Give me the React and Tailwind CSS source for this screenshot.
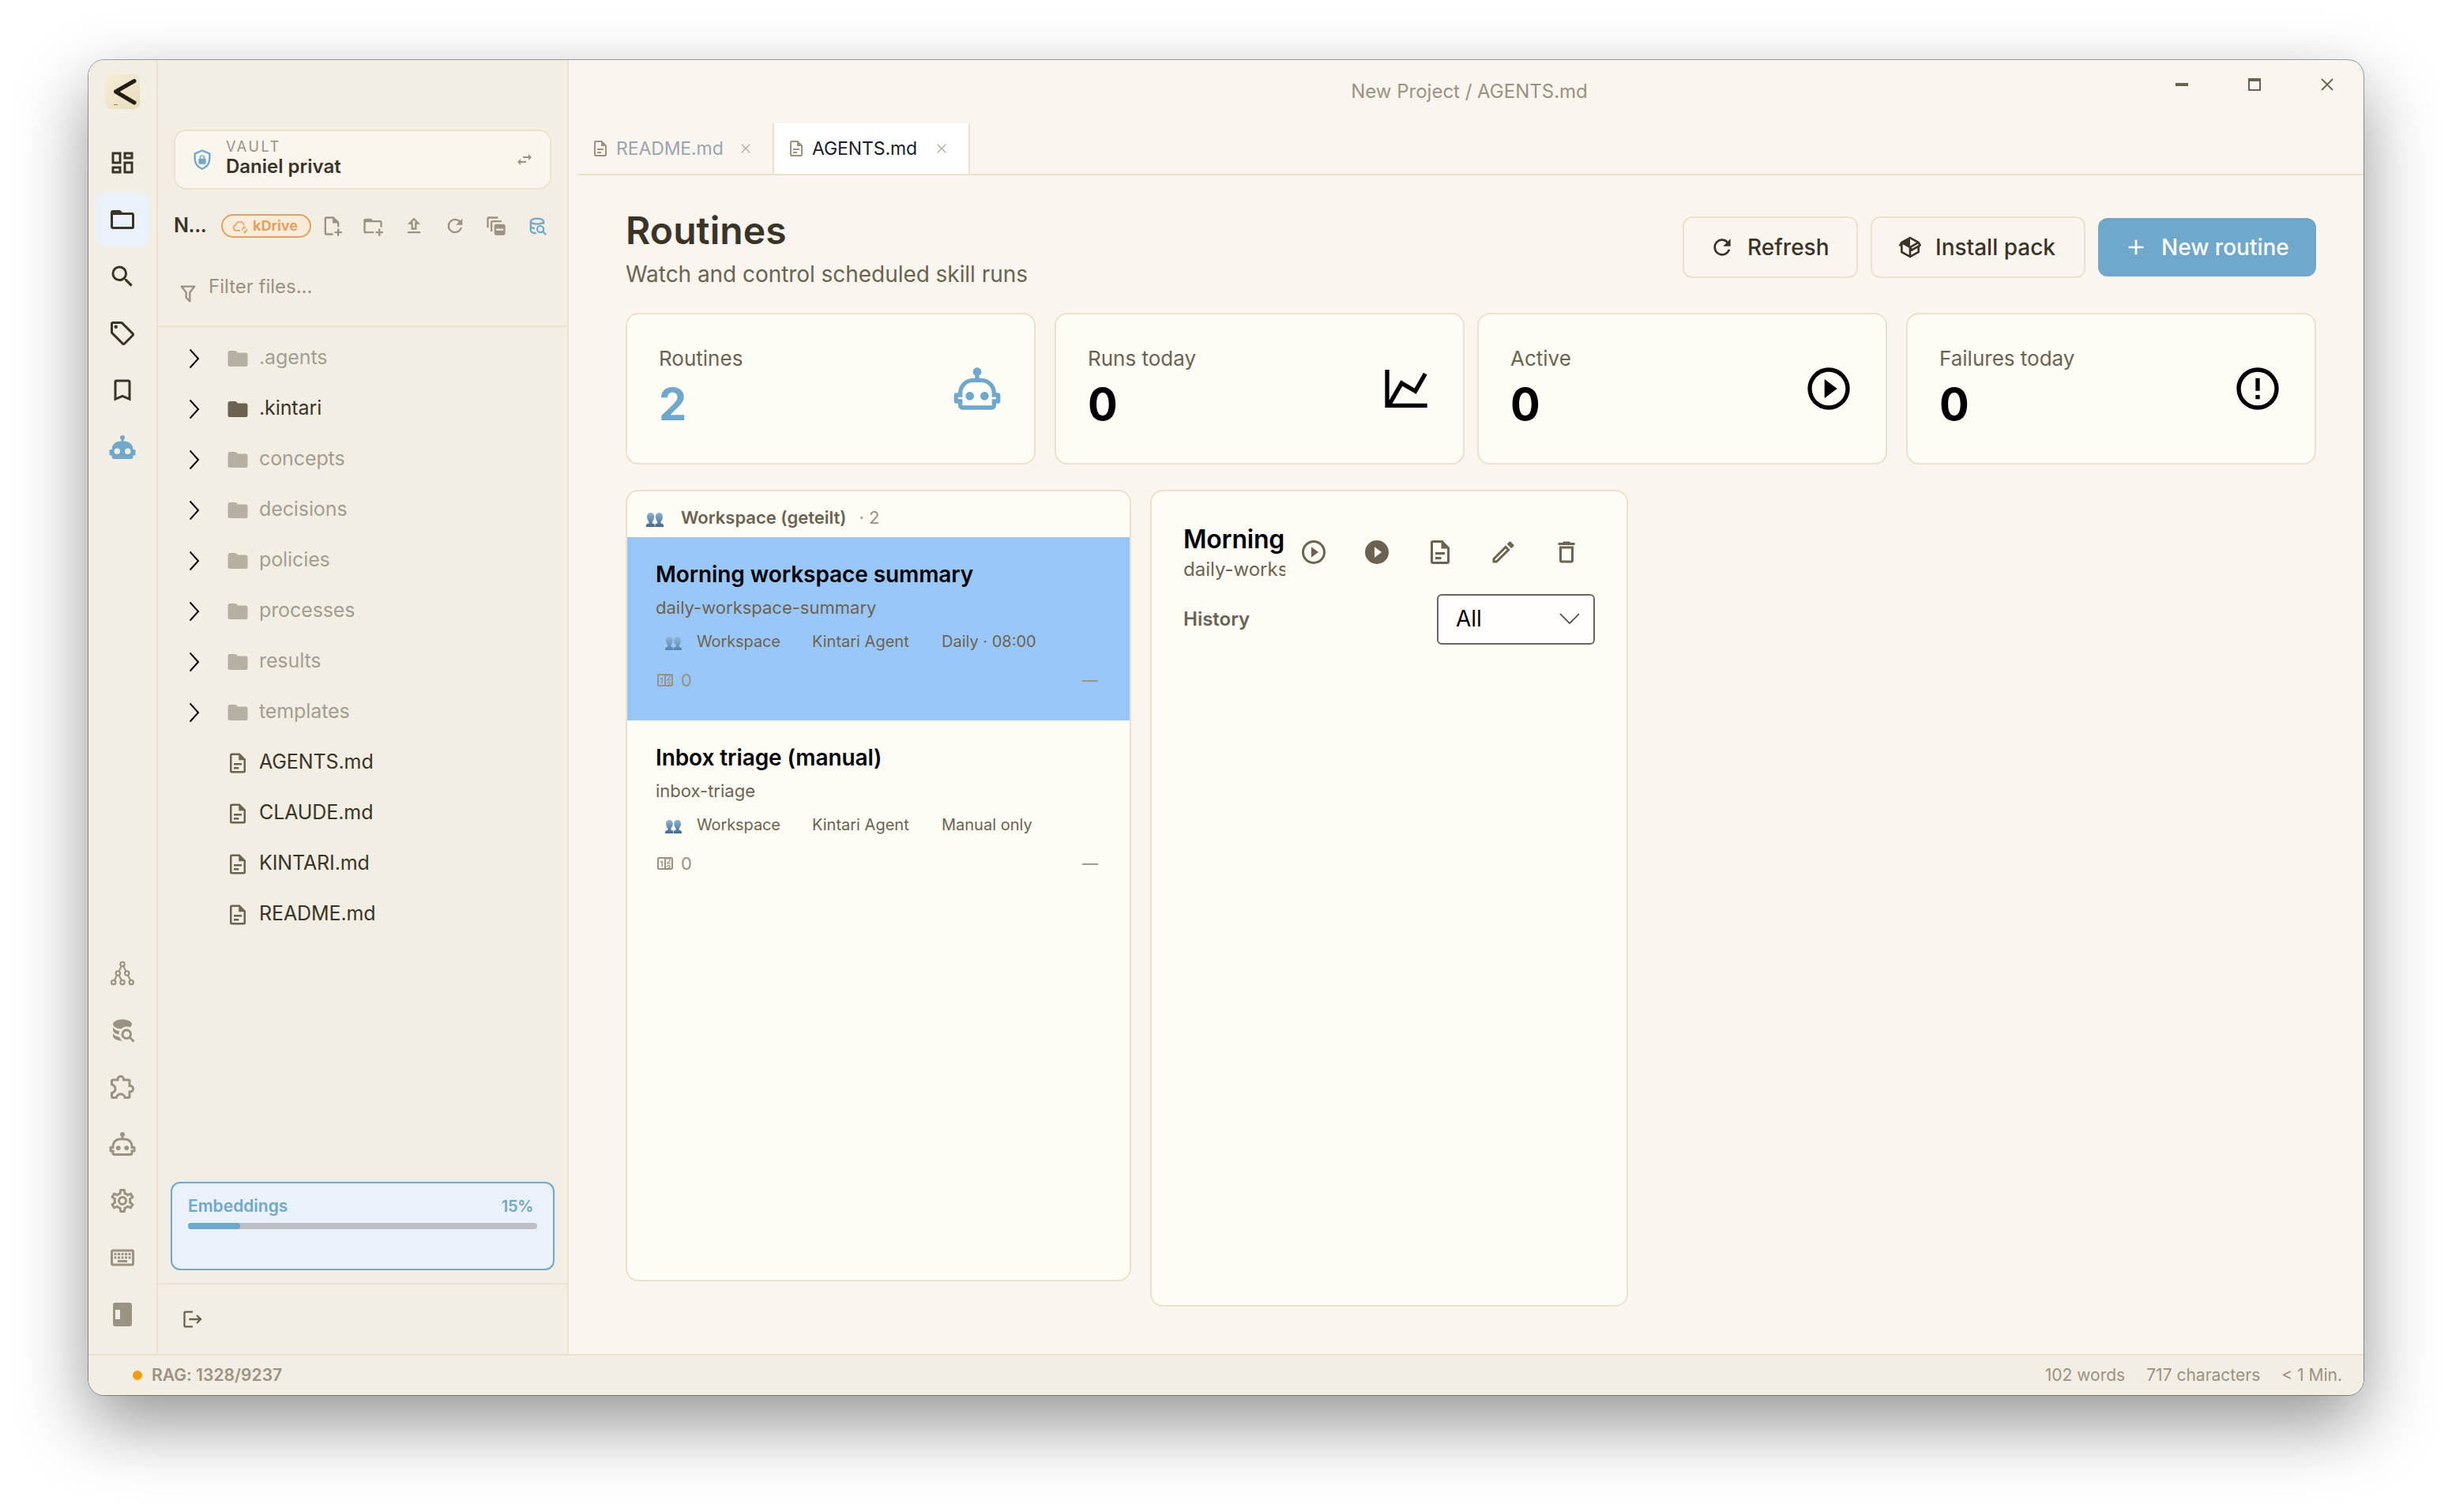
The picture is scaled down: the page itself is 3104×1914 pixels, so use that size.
import clsx from "clsx";

const paths = {
  dashboard:
    "M19,5V7H15V5H19M9,5V11H5V5H9M19,13V19H15V13H19M9,17V19H5V17H9M21,3H13V9H21V3M11,3H3V13H11V3M21,11H13V21H21V11M11,15H3V21H11V15Z",
  folderOutline:
    "M20,18H4V8H20M20,6H12L10,4H4C2.89,4 2,4.89 2,6V18A2,2 0 0,0 4,20H20A2,2 0 0,0 22,18V8C22,6.89 21.1,6 20,6Z",
  folder:
    "M10,4H4C2.89,4 2,4.89 2,6V18A2,2 0 0,0 4,20H20A2,2 0 0,0 22,18V8C22,6.89 21.1,6 20,6H12L10,4Z",
  search:
    "M9.5,3A6.5,6.5 0 0,1 16,9.5C16,11.11 15.41,12.59 14.44,13.73L14.71,14H15.5L20.5,19L19,20.5L14,15.5V14.71L13.73,14.44C12.59,15.41 11.11,16 9.5,16A6.5,6.5 0 0,1 3,9.5A6.5,6.5 0 0,1 9.5,3M9.5,5C7,5 5,7 5,9.5C5,12 7,14 9.5,14C12,14 14,12 14,9.5C14,7 12,5 9.5,5Z",
  tag: "M21.41 11.58L12.41 2.58A2 2 0 0 0 11 2H4A2 2 0 0 0 2 4V11A2 2 0 0 0 2.59 12.42L11.59 21.42A2 2 0 0 0 13 22A2 2 0 0 0 14.41 21.41L21.41 14.41A2 2 0 0 0 22 13A2 2 0 0 0 21.41 11.58M13 20L4 11V4H11L20 13M6.5 5A1.5 1.5 0 1 1 5 6.5A1.5 1.5 0 0 1 6.5 5Z",
  bookmark:
    "M17,18L12,15.82L7,18V5H17M17,3H7A2,2 0 0,0 5,5V21L12,18L19,21V5C19,3.89 18.1,3 17,3Z",
  robot:
    "M12,2A2,2 0 0,1 14,4C14,4.74 13.6,5.39 13,5.73V7H14A7,7 0 0,1 21,14H22A1,1 0 0,1 23,15V18A1,1 0 0,1 22,19H21V20A2,2 0 0,1 19,22H5A2,2 0 0,1 3,20V19H2A1,1 0 0,1 1,18V15A1,1 0 0,1 2,14H3A7,7 0 0,1 10,7H11V5.73C10.4,5.39 10,4.74 10,4A2,2 0 0,1 12,2M7.5,13A2.5,2.5 0 0,0 5,15.5A2.5,2.5 0 0,0 7.5,18A2.5,2.5 0 0,0 10,15.5A2.5,2.5 0 0,0 7.5,13M16.5,13A2.5,2.5 0 0,0 14,15.5A2.5,2.5 0 0,0 16.5,18A2.5,2.5 0 0,0 19,15.5A2.5,2.5 0 0,0 16.5,13Z",
  robotOutline:
    "M17.5 15.5C17.5 16.61 16.61 17.5 15.5 17.5S13.5 16.61 13.5 15.5 14.4 13.5 15.5 13.5 17.5 14.4 17.5 15.5M8.5 13.5C7.4 13.5 6.5 14.4 6.5 15.5S7.4 17.5 8.5 17.5 10.5 16.61 10.5 15.5 9.61 13.5 8.5 13.5M23 15V18C23 18.55 22.55 19 22 19H21V20C21 21.11 20.11 22 19 22H5C3.9 22 3 21.11 3 20V19H2C1.45 19 1 18.55 1 18V15C1 14.45 1.45 14 2 14H3C3 10.13 6.13 7 10 7H11V5.73C10.4 5.39 10 4.74 10 4C10 2.9 10.9 2 12 2S14 2.9 14 4C14 4.74 13.6 5.39 13 5.73V7H14C17.87 7 21 10.13 21 14H22C22.55 14 23 14.45 23 15M21 16H19V14C19 11.24 16.76 9 14 9H10C7.24 9 5 11.24 5 14V16H3V17H5V20H19V17H21V16Z",
  dbSearch:
    "M18.68,12.32C16.92,10.56 14.07,10.57 12.32,12.33C10.56,14.09 10.56,16.94 12.32,18.69C13.81,20.17 16.11,20.43 17.89,19.32L21,22.39L22.39,21L19.3,17.89C20.43,16.12 20.17,13.8 18.68,12.32M17.27,17.27C16.29,18.25 14.71,18.24 13.73,17.27C12.76,16.29 12.76,14.71 13.74,13.73C14.71,12.76 16.29,12.76 17.27,13.73C18.24,14.71 18.24,16.29 17.27,17.27M10.9,20.1C10.25,19.44 9.74,18.65 9.42,17.78C6.27,17.25 4,15.76 4,14V17C4,19.21 7.58,21 12,21V21C11.6,20.74 11.23,20.44 10.9,20.1M4,9V12C4,13.68 6.07,15.12 9,15.7C9,15.63 9,15.57 9,15.5C9,14.57 9.2,13.65 9.58,12.81C6.34,12.3 4,10.79 4,9M12,3C7.58,3 4,4.79 4,7C4,9 7,10.68 10.85,11H10.9C12.1,9.74 13.76,9 15.5,9C16.41,9 17.31,9.19 18.14,9.56C19.17,9.09 19.87,8.12 20,7C20,4.79 16.42,3 12,3Z",
  puzzle:
    "M22,13.5C22,15.26 20.7,16.72 19,16.96V20A2,2 0 0,1 17,22H13.2V21.7A2.7,2.7 0 0,0 10.5,19C9,19 7.8,20.21 7.8,21.7V22H4A2,2 0 0,1 2,20V16.2H2.3C3.79,16.2 5,15 5,13.5C5,12 3.79,10.8 2.3,10.8H2V7A2,2 0 0,1 4,5H7.04C7.28,3.3 8.74,2 10.5,2C12.26,2 13.72,3.3 13.96,5H17A2,2 0 0,1 19,7V10.04C20.7,10.28 22,11.74 22,13.5M17,15H18.5A1.5,1.5 0 0,0 20,13.5A1.5,1.5 0 0,0 18.5,12H17V7H12V5.5A1.5,1.5 0 0,0 10.5,4A1.5,1.5 0 0,0 9,5.5V7H4V9.12C5.76,9.8 7,11.5 7,13.5C7,15.5 5.75,17.2 4,17.88V20H6.12C6.8,18.25 8.5,17 10.5,17C12.5,17 14.2,18.25 14.88,20H17V15Z",
  cog: "M12,8A4,4 0 0,1 16,12A4,4 0 0,1 12,16A4,4 0 0,1 8,12A4,4 0 0,1 12,8M12,10A2,2 0 0,0 10,12A2,2 0 0,0 12,14A2,2 0 0,0 14,12A2,2 0 0,0 12,10M10,22C9.75,22 9.54,21.82 9.5,21.58L9.13,18.93C8.5,18.68 7.96,18.34 7.44,17.94L4.95,18.95C4.73,19.03 4.46,18.95 4.34,18.73L2.34,15.27C2.21,15.05 2.27,14.78 2.46,14.63L4.57,12.97L4.5,12L4.57,11L2.46,9.37C2.27,9.22 2.21,8.95 2.34,8.73L4.34,5.27C4.46,5.05 4.73,4.96 4.95,5.05L7.44,6.05C7.96,5.66 8.5,5.32 9.13,5.07L9.5,2.42C9.54,2.18 9.75,2 10,2H14C14.25,2 14.46,2.18 14.5,2.42L14.87,5.07C15.5,5.32 16.04,5.66 16.56,6.05L19.05,5.05C19.27,4.96 19.54,5.05 19.66,5.27L21.66,8.73C21.79,8.95 21.73,9.22 21.54,9.37L19.43,11L19.5,12L19.43,13L21.54,14.63C21.73,14.78 21.79,15.05 21.66,15.27L19.66,18.73C19.54,18.95 19.27,19.04 19.05,18.95L16.56,17.95C16.04,18.34 15.5,18.68 14.87,18.93L14.5,21.58C14.46,21.82 14.25,22 14,22H10M11.25,4L10.88,6.61C9.68,6.86 8.62,7.5 7.85,8.39L5.44,7.35L4.69,8.65L6.8,10.2C6.4,11.37 6.4,12.64 6.8,13.8L4.68,15.36L5.43,16.66L7.86,15.62C8.63,16.5 9.68,17.14 10.87,17.38L11.24,20H12.76L13.13,17.39C14.32,17.14 15.37,16.5 16.14,15.62L18.57,16.66L19.32,15.36L17.2,13.81C17.6,12.64 17.6,11.37 17.2,10.2L19.31,8.65L18.56,7.35L16.15,8.39C15.38,7.5 14.32,6.86 13.12,6.62L12.75,4H11.25Z",
  keyboard:
    "M4,5A2,2 0 0,0 2,7V17A2,2 0 0,0 4,19H20A2,2 0 0,0 22,17V7A2,2 0 0,0 20,5H4M4,7H20V17H4V7M5,8V10H7V8H5M8,8V10H10V8H8M11,8V10H13V8H11M14,8V10H16V8H14M17,8V10H19V8H17M5,11V13H7V11H5M8,11V13H10V11H8M11,11V13H13V11H11M14,11V13H16V11H14M17,11V13H19V11H17M8,14V16H16V14H8Z",
  panel: "M6,2H18A2,2 0 0,1 20,4V20A2,2 0 0,1 18,22H6A2,2 0 0,1 4,20V4A2,2 0 0,1 6,2M6,8V16H10V8H6Z",
  shieldLock:
    "M21,11C21,16.55 17.16,21.74 12,23C6.84,21.74 3,16.55 3,11V5L12,1L21,5V11M12,21C15.75,20 19,15.54 19,11.22V6.3L12,3.18L5,6.3V11.22C5,15.54 8.25,20 12,21M14.8,11V9.5C14.8,8.1 13.4,7 12,7C10.6,7 9.2,8.1 9.2,9.5V11C8.6,11 8,11.6 8,12.2V15.7C8,16.4 8.6,17 9.2,17H14.7C15.4,17 16,16.4 16,15.8V12.3C16,11.6 15.4,11 14.8,11M13.5,11H10.5V9.5C10.5,8.7 11.2,8.2 12,8.2C12.8,8.2 13.5,8.7 13.5,9.5V11Z",
  swap: "M21,9L17,5V8H10V10H17V13M7,11L3,15L7,19V16H14V14H7V11Z",
  filePlus:
    "M23 18H20V15H18V18H15V20H18V23H20V20H23M6 2C4.89 2 4 2.89 4 4V20C4 21.11 4.89 22 6 22H13.81C13.45 21.38 13.2 20.7 13.08 20H6V4H13V9H18V13.08C18.33 13.03 18.67 13 19 13C19.34 13 19.67 13.03 20 13.08V8L14 2",
  folderPlus:
    "M13 19C13 19.34 13.04 19.67 13.09 20H4C2.9 20 2 19.11 2 18V6C2 4.89 2.89 4 4 4H10L12 6H20C21.1 6 22 6.89 22 8V13.81C21.39 13.46 20.72 13.22 20 13.09V8H4V18H13.09C13.04 18.33 13 18.66 13 19M20 18V15H18V18H15V20H18V23H20V20H23V18H20Z",
  upload: "M9,10V16H15V10H19L12,3L5,10H9M12,5.8L14.2,8H13V14H11V8H9.8L12,5.8M19,18H5V20H19V18Z",
  refresh:
    "M17.65,6.35C16.2,4.9 14.21,4 12,4A8,8 0 0,0 4,12A8,8 0 0,0 12,20C15.73,20 18.84,17.45 19.73,14H17.65C16.83,16.33 14.61,18 12,18A6,6 0 0,1 6,12A6,6 0 0,1 12,6C13.66,6 15.14,6.69 16.22,7.78L13,11H20V4L17.65,6.35Z",
  collapseAll:
    "M4,2A2,2 0 0,0 2,4V14H4V4H14V2H4M8,6A2,2 0 0,0 6,8V18H8V8H18V6H8M12,10A2,2 0 0,0 10,12V20A2,2 0 0,0 12,22H20A2,2 0 0,0 22,20V12A2,2 0 0,0 20,10H12M20,15V17H12V15H20Z",
  filter:
    "M15,19.88C15.04,20.18 14.94,20.5 14.71,20.71C14.32,21.1 13.69,21.1 13.3,20.71L9.29,16.7C9.06,16.47 8.96,16.16 9,15.87V10.75L4.21,4.62C3.87,4.19 3.95,3.56 4.38,3.22C4.57,3.08 4.78,3 5,3H19C19.22,3 19.43,3.08 19.62,3.22C20.05,3.56 20.13,4.19 19.79,4.62L15,10.75V19.88M7.04,5L11,10.06V15.58L13,17.58V10.05L16.96,5H7.04Z",
  file: "M6,2A2,2 0 0,0 4,4V20A2,2 0 0,0 6,22H18A2,2 0 0,0 20,20V8L14,2H6M6,4H13V9H18V20H6V4M8,12V14H16V12H8M8,16V18H13V16H8Z",
  logout:
    "M17 7L15.59 8.41L18.17 11H8V13H18.17L15.59 15.58L17 17L22 12M4 5H12V3H4C2.9 3 2 3.9 2 5V19C2 20.1 2.9 21 4 21H12V19H4V5Z",
  pack: "M2,10.96C1.5,10.68 1.35,10.07 1.63,9.59L3.13,7C3.24,6.8 3.41,6.66 3.6,6.58L11.43,2.18C11.59,2.06 11.79,2 12,2C12.21,2 12.41,2.06 12.57,2.18L20.47,6.62C20.66,6.72 20.82,6.88 20.91,7.08L22.36,9.6C22.64,10.08 22.47,10.69 22,10.96L21,11.54V16.5C21,16.88 20.79,17.21 20.47,17.38L12.57,21.82C12.41,21.94 12.21,22 12,22C11.79,22 11.59,21.94 11.43,21.82L3.53,17.38C3.21,17.21 3,16.88 3,16.5V10.96C2.7,11.13 2.32,11.14 2,10.96M12,4.15L12,10.85L17.96,7.5L12,4.15M5,15.91L11,19.29V12.58L5,9.21V15.91M19,15.91V12.69L14,15.59C13.67,15.77 13.3,15.76 13,15.6V19.29L19,15.91M13.85,13.36L20.13,9.73L19.55,8.72L13.27,12.35L13.85,13.36Z",
  plus: "M19,13H13V19H11V13H5V11H11V5H13V11H19V13Z",
  chart: "M16,11.78L20.24,4.45L21.97,5.45L16.74,14.5L10.23,10.75L5.46,19H22V21H2V3H4V17.54L9.5,8L16,11.78Z",
  playOutline:
    "M12,20C7.59,20 4,16.41 4,12C4,7.59 7.59,4 12,4C16.41,4 20,7.59 20,12C20,16.41 16.41,20 12,20M12,2A10,10 0 0,0 2,12A10,10 0 0,0 12,22A10,10 0 0,0 22,12A10,10 0 0,0 12,2M10,16.5L16,12L10,7.5V16.5Z",
  play: "M10,16.5V7.5L16,12M12,2A10,10 0 0,0 2,12A10,10 0 0,0 12,22A10,10 0 0,0 22,12A10,10 0 0,0 12,2Z",
  alert:
    "M11,15H13V17H11V15M11,7H13V13H11V7M12,2C6.47,2 2,6.5 2,12A10,10 0 0,0 12,22A10,10 0 0,0 22,12A10,10 0 0,0 12,2M12,20A8,8 0 0,1 4,12A8,8 0 0,1 12,4A8,8 0 0,1 20,12A8,8 0 0,1 12,20Z",
  pencil:
    "M14.06,9L15,9.94L5.92,19H5V18.08L14.06,9M17.66,3C17.41,3 17.15,3.1 16.96,3.29L15.13,5.12L18.88,8.87L20.71,7.04C21.1,6.65 21.1,6 20.71,5.63L18.37,3.29C18.17,3.09 17.92,3 17.66,3M14.06,6.19L3,17.25V21H6.75L17.81,9.94L14.06,6.19Z",
  trash: "M6,19A2,2 0 0,0 8,21H16A2,2 0 0,0 18,19V7H6V19M8,9H16V19H8V9M15.5,4L14.5,3H9.5L8.5,4H5V6H19V4H15.5Z",
  counter:
    "M4,4H20A2,2 0 0,1 22,6V18A2,2 0 0,1 20,20H4A2,2 0 0,1 2,18V6A2,2 0 0,1 4,4M4,6V18H11V6H4M20,18V6H18.76C19,6.54 18.95,7.07 18.95,7.13C18.88,7.8 18.41,8.5 18.24,8.75L15.91,11.3L19.23,11.28L19.24,12.5L14.04,12.47L14,11.47C14,11.47 17.05,8.24 17.2,7.95C17.34,7.67 17.91,6 16.5,6C15.27,6.05 15.41,7.3 15.41,7.3L13.87,7.31C13.87,7.31 13.88,6.65 14.25,6H13V18H15.58L15.57,17.14L16.54,17.13C16.54,17.13 17.45,16.97 17.46,16.08C17.5,15.08 16.65,15.08 16.5,15.08C16.37,15.08 15.43,15.13 15.43,15.95H13.91C13.91,15.95 13.95,13.89 16.5,13.89C19.1,13.89 18.96,15.91 18.96,15.91C18.96,15.91 19,17.16 17.85,17.63L18.37,18H20M8.92,16H7.42V10.2L5.62,10.76V9.53L8.76,8.41H8.92V16Z",
};

const Icon = ({ name, className }) => (
  <svg viewBox="0 0 24 24" fill="currentColor" fillRule="evenodd" className={clsx("shrink-0", className)}>
    <path d={paths[name]} />
  </svg>
);

const GraphIcon = ({ className }) => (
  <svg viewBox="0 0 24 24" fill="none" stroke="currentColor" strokeWidth="1.4" className={clsx("shrink-0", className)}>
    <circle cx="12" cy="4.3" r="1.8" />
    <circle cx="8.2" cy="12" r="1.8" />
    <circle cx="15.8" cy="12" r="1.8" />
    <circle cx="4.5" cy="19.6" r="1.8" />
    <circle cx="12" cy="19.6" r="1.8" />
    <circle cx="19.5" cy="19.6" r="1.8" />
    <path d="M11.2 5.9 9 10.4M12.8 5.9l2.2 4.5M7.4 13.6l-2.1 4.3M9 13.6l2.2 4.3M16.6 13.6l2.1 4.3" />
  </svg>
);

const DbSearchOutlineIcon = ({ className }) => (
  <svg viewBox="0 0 24 24" fill="none" stroke="currentColor" strokeWidth="1.9" className={clsx("shrink-0", className)}>
    <ellipse cx="12" cy="7" rx="7" ry="3" />
    <path d="M5 7v10c0 1.6 2.6 2.8 6 3M5 12c0 1.3 1.9 2.4 4.4 2.8M19 7v3" />
    <circle cx="15.5" cy="15.5" r="3.5" />
    <path d="m18 18 3.7 3.7" />
  </svg>
);

const CloudSyncIcon = ({ className }) => (
  <svg viewBox="0 0 24 24" fill="none" stroke="currentColor" strokeWidth="1.9" className={clsx("shrink-0", className)}>
    <path d="M12 19H6.2a4.2 4.2 0 0 1-.8-8.3A6.2 6.2 0 0 1 17.600 11" />
    <path d="M15.2 18.6a3.4 3.4 0 0 1 3-4M21.9 16.8a3.4 3.4 0 0 1-3 4.2" />
    <path d="M16.6 13.4h2.6v2.8M20.6 22.3h-2.4v-2.7" strokeWidth="1.4" />
  </svg>
);

const PeopleIcon = ({ className }) => (
  <svg viewBox="0 0 22 18" className={clsx("shrink-0", className)}>
    <defs>
      <linearGradient id="people" x1="0" y1="0" x2="0" y2="1">
        <stop offset="0" stopColor="#8fb4d0" />
        <stop offset="1" stopColor="#3f6a94" />
      </linearGradient>
    </defs>
    <g fill="url(#people)">
      <path d="M5.6 0C8.6 0 10.300 2 10.200 5 10.100 8 9 10 7.800 11.200V13.500l2.900 1.100V18H0v-2.400c0-1.200 1.600-1.700 3.400-2.100v-2.300C2.200 10 1.100 8 1 5 .9 2 2.600 0 5.600 0Z" />
      <path d="M16.400 0c-3 0-4.700 2-4.600 5 .1 3 1.200 5 2.400 6.200v2.300l-2.900 1.100V18H22v-2.400c0-1.200-1.600-1.700-3.400-2.100v-2.300C19.800 10 20.900 8 21 5c.1-3-1.600-5-4.600-5Z" />
    </g>
  </svg>
);

const Logo = () => (
  <div className="h-11 w-11 rounded-lg bg-gradient-to-br from-[#f7eed8] to-[#e7dcbc]">
    <svg viewBox="0 0 44 44" fill="none" className="h-11 w-11">
      <path d="M37 8.500 13.500 22 37 36" stroke="#241d14" strokeWidth="5" strokeLinecap="round" strokeLinejoin="round" />
      <path d="M11 38.500h5" stroke="#b5705a" strokeWidth="1" />
    </svg>
  </div>
);

const RailButton = ({ active, children }) => (
  <div className={clsx("flex h-[68px] w-[68px] items-center justify-center rounded-xl", active && "bg-[#eaf1f8]")}>
    {children}
  </div>
);

const Rail = () => (
  <nav className="flex w-[88px] flex-col items-center border-r-2 border-[#eae2cd] pt-[18px] pb-4">
    <Logo />
    <div className="mt-[34px] flex flex-col gap-1 text-[#3a3428]">
      <RailButton>
        <Icon name="dashboard" className="h-9 w-9" />
      </RailButton>
      <RailButton active>
        <Icon name="folderOutline" className="h-9 w-9" />
      </RailButton>
      <RailButton>
        <Icon name="search" className="h-9 w-9" />
      </RailButton>
      <RailButton>
        <Icon name="tag" className="h-9 w-9" />
      </RailButton>
      <RailButton>
        <Icon name="bookmark" className="h-9 w-9" />
      </RailButton>
      <RailButton>
        <Icon name="robot" className="h-9 w-9 text-[#6fa8ca]" />
      </RailButton>
    </div>
    <div className="mt-auto flex flex-col gap-1 text-[#9a9282]">
      <RailButton>
        <GraphIcon className="h-9 w-9" />
      </RailButton>
      {["dbSearch", "puzzle", "robotOutline", "cog", "keyboard", "panel"].map((name) => (
        <RailButton key={name}>
          <Icon name={name} className="h-9 w-9" />
        </RailButton>
      ))}
    </div>
  </nav>
);

const folders = [".agents", ".kintari", "concepts", "decisions", "policies", "processes", "results", "templates"];
const files = ["AGENTS.md", "CLAUDE.md", "KINTARI.md", "README.md"];

const Sidebar = () => (
  <aside className="flex w-[520px] flex-col border-r-2 border-[#eae2cd] pt-[88px]">
    <div className="mx-5 flex h-[76px] shrink-0 items-center rounded-2xl border-2 border-[#eae2cd] bg-[#faf6ed] pr-5 pl-5">
      <Icon name="shieldLock" className="h-7 w-7 text-[#6fa8ca]" />
      <div className="mb-1 ml-4 flex-1">
        <p className="text-[18px] leading-[22px] tracking-[2.6px] text-[#9a9282]">VAULT</p>
        <p className="text-[24px] leading-7 font-semibold text-[#3a3428]">Daniel privat</p>
      </div>
      <Icon name="swap" className="h-6 w-6 text-[#9a9282]" />
    </div>

    <div className="mt-[22px] flex h-12 shrink-0 items-center pr-6 pl-5 text-[#9a9282]">
      <span className="w-[60px] text-[25px] font-semibold tracking-[-0.4px] text-[#3a3428]">N...</span>
      <span className="flex h-[30px] w-[114px] items-center rounded-full border-2 border-[#dfa265] bg-[#faecd8] pl-3 text-[#dfa265]">
        <CloudSyncIcon className="h-5 w-5" />
        <span className="ml-1.5 text-[18px] leading-none font-bold">kDrive</span>
      </span>
      <div className="ml-auto flex gap-6">
        <Icon name="filePlus" className="h-7 w-7" />
        <Icon name="folderPlus" className="h-7 w-7" />
        <Icon name="upload" className="h-7 w-7" />
        <Icon name="refresh" className="h-7 w-7" />
        <Icon name="collapseAll" className="h-7 w-7" />
        <DbSearchOutlineIcon className="h-7 w-7 text-[#6fa8ca]" />
      </div>
    </div>

    <div className="flex h-[104px] shrink-0 items-start border-b-2 border-[#eae2cd] pl-6 text-[#9a9282]">
      <Icon name="filter" className="mt-12 h-7 w-7" />
      <span className="mt-[37px] ml-3 text-[24px] leading-8">Filter files...</span>
    </div>

    <div className="flex-1 pt-2 text-[25px] tracking-[-0.1px]">
      {folders.map((name) => {
        const dim = name !== ".kintari";
        return (
          <div key={name} className="flex h-16 items-center pl-[39px]">
            <svg viewBox="0 0 14 26" fill="none" className="h-[26px] w-[14px]">
              <path d="M1.500 1.500 12 13 1.500 24.500" stroke="#000" strokeWidth="2" />
            </svg>
            <Icon name="folder" className={clsx("ml-[33px] h-[30px] w-[30px]", dim ? "text-[#b6afa3]" : "text-[#6b6352]")} />
            <span className={clsx("ml-3 pb-0.5", dim ? "text-[#a39e92]" : "text-[#3a3428]")}>{name}</span>
          </div>
        );
      })}
      {files.map((name) => (
        <div key={name} className="flex h-16 items-center pl-[86px] text-[#3a3428]">
          <Icon name="file" className="h-[30px] w-[30px] text-[#6b6352]" />
          <span className="ml-3 pb-0.5">{name}</span>
        </div>
      ))}
    </div>

    <div className="mx-4 mb-4 h-28 shrink-0 rounded-xl border-2 border-[#6fa8ca] bg-[#eaf1f8] px-5 pt-[15px]">
      <div className="flex items-center justify-between pr-[5px] text-[21px] leading-7 font-semibold text-[#6fa8ca]">
        <span>Embeddings</span>
        <span className="text-[20px] tracking-[-0.3px]">15%</span>
      </div>
      <div className="mt-[7px] h-2 rounded-full bg-[#bdc1c4]">
        <div className="h-2 w-[15%] rounded-full bg-[#6fa8ca]" />
      </div>
    </div>
    <div className="flex h-[90px] shrink-0 items-center border-t-2 border-[#eae2cd] pl-[30px] text-[#6b6352]">
      <Icon name="logout" className="h-7 w-7" />
    </div>
  </aside>
);

const CloseGlyph = ({ className }) => (
  <svg viewBox="0 0 16 16" fill="none" stroke="currentColor" strokeWidth="1.8" className={clsx("shrink-0", className)}>
    <path d="m1 1 14 14M15 1 1 15" />
  </svg>
);

const TitleBar = () => (
  <header className="grid h-20 shrink-0 grid-cols-[1fr_auto_1fr] pl-2">
    <div />
    <h1 className="flex items-center text-[24px] text-[#9a9282]">New Project / AGENTS.md</h1>
    <div className="flex h-[62px] justify-end text-[#6b6352]">
      <div className="flex w-[92px] items-center justify-center">
        <div className="h-1 w-4 bg-current" />
      </div>
      <div className="flex w-[92px] items-center justify-center">
        <div className="h-4 w-4 border-2 border-t-4 border-current" />
      </div>
      <div className="flex w-[92px] items-center justify-center">
        <CloseGlyph className="h-4 w-4" />
      </div>
    </div>
  </header>
);

const Tabs = () => (
  <div className="ml-3 flex h-[66px] shrink-0 border-b-2 border-[#eae2cd] text-[23px] tracking-[-0.1px]">
    <div className="flex w-[246px] items-center pr-[28px] pl-4 text-[#9ca3af]">
      <Icon name="file" className="h-6 w-6 text-[#9a9282]" />
      <span className="ml-2">README.md</span>
      <CloseGlyph className="ml-auto h-3 w-3 text-[#b5aea0]" />
    </div>
    <div className="flex w-[250px] items-center border-x-2 border-[#eae2cd] bg-white pr-[28px] pl-4 text-[#1a1a2e]">
      <Icon name="file" className="h-6 w-6 text-[#9a9282]" />
      <span className="ml-2">AGENTS.md</span>
      <CloseGlyph className="ml-auto h-3 w-3 text-[#b5aea0]" />
    </div>
  </div>
);

const StatCard = ({ label, value, icon, accent, className }) => (
  <div
    className={clsx(
      "flex h-48 w-[519px] items-center justify-between rounded-2xl border-2 border-[#eae2cd] bg-[#fffcf5] px-10",
      accent ? "text-[#6fa8ca]" : "text-black",
      className
    )}
  >
    <div className="pt-1">
      <p className="text-[26px] leading-9 text-[#6b6352]">{label}</p>
      <p className="text-[56px] leading-[80px] font-bold">{value}</p>
    </div>
    <Icon name={icon} className="h-16 w-16" />
  </div>
);

const RoutineItem = ({ title, slug, schedule, selected }) => (
  <div className={clsx("h-[232px] px-9 pt-[29px]", selected && "bg-[#9ac7f9]")}>
    <h3 className="text-[28px] leading-9 font-semibold tracking-[-0.08px] text-black">{title}</h3>
    <p className="mt-2 text-[22px] leading-8 text-[#6b6352]">{slug}</p>
    <div className="mt-[11px] flex h-8 items-center text-[20px] text-[#6b6352]">
      <PeopleIcon className={clsx("mt-1 ml-3 h-[17px] w-[21px]", selected && "opacity-75")} />
      <span className="ml-[19px] w-[146px] tracking-[-0.1px]">Workspace</span>
      <span className="w-[164px]">Kintari Agent</span>
      <span>{schedule}</span>
    </div>
    <div className="mt-[17px] flex h-8 items-center pr-1 text-[20px] text-[#9a9282]">
      <Icon name="counter" className="h-6 w-6" />
      <span className="ml-2 text-[22px]">0</span>
      <span className="ml-auto">—</span>
    </div>
  </div>
);

const RoutineList = () => (
  <section className="h-[1002px] w-[640px] overflow-hidden rounded-2xl border-2 border-[#eae2cd] bg-[#fffcf5]">
    <div className="flex h-[58px] items-center pt-2 pl-6 text-[22px] text-[#6b6352]">
      <PeopleIcon className="mt-1.5 h-[18px] w-[22px]" />
      <h2 className="ml-[22px] font-semibold">Workspace (geteilt)</h2>
      <span className="ml-4 text-[#9a9282]">· 2</span>
    </div>
    <RoutineItem title="Morning workspace summary" slug="daily-workspace-summary" schedule="Daily · 08:00" selected />
    <RoutineItem title="Inbox triage (manual)" slug="inbox-triage" schedule="Manual only" />
  </section>
);

const RoutineDetail = () => (
  <section className="h-[1034px] w-[605px] rounded-2xl border-2 border-[#eae2cd] bg-[#fffcf5] px-10 pt-[38px]">
    <div className="flex">
      <div className="w-[129px] overflow-hidden whitespace-nowrap">
        <h2 className="text-[32px] leading-[45px] font-semibold tracking-[-0.2px] text-black">Morning workspace summary</h2>
        <p className="text-[24px] leading-8 text-[#6b6352]">daily-workspace-summary</p>
      </div>
      <div className="mt-[21px] ml-[18px] flex gap-11 text-[#6b6352]">
        {["playOutline", "play", "file", "pencil", "trash"].map((name) => (
          <Icon key={name} name={name} className="h-9 w-9" />
        ))}
      </div>
    </div>
    <div className="mt-[15px] flex items-center justify-between">
      <h3 className="text-[24px] font-semibold text-[#6b6352]">History</h3>
      <div className="flex h-16 w-[200px] items-center justify-between rounded-md border-2 border-[#666] bg-[#fffefc] pr-[17px] pb-0.5 pl-[22px]">
        <span className="text-[28px] text-black">All</span>
        <svg viewBox="0 0 26 14" fill="none" className="h-3.5 w-[26px]">
          <path d="M1 1 13 13 25 1" stroke="#444" strokeWidth="1.700" />
        </svg>
      </div>
    </div>
  </section>
);

const StatusBar = () => (
  <footer className="flex h-[52px] shrink-0 items-center border-t-2 border-[#eae2cd] bg-[#f3eee3] pr-[27px] pl-14 text-[21px] text-[#9a9282]">
    <span className="h-3 w-3 rounded-full bg-[#f59e0b]" />
    <span className="ml-3 font-semibold tracking-[0.05px]">RAG: 1328/9237</span>
    <div className="ml-auto flex gap-[27px]">
      <span>102 words</span>
      <span>717 characters</span>
      <span>&lt; 1 Min.</span>
    </div>
  </footer>
);

const App = () => {
  return (
    <div className="h-[1914px] w-[3104px] overflow-hidden bg-white px-28 pt-[76px] font-['Inter',sans-serif]">
      <div className="flex h-[1690px] w-[2880px] flex-col overflow-hidden rounded-[20px] bg-[#faf5ee] shadow-[0_0_0_1px_rgba(0,0,0,0.35),0_36px_90px_rgba(0,0,0,0.42)]">
        <div className="flex min-h-0 flex-1">
          <div className="flex bg-[#f3eee3]">
            <Rail />
            <Sidebar />
          </div>
          <main className="flex flex-1 flex-col">
            <TitleBar />
            <Tabs />
            <div className="pt-[42px] pr-[60px] pl-[72px]">
              <div className="flex h-[98px] items-start justify-between">
                <div>
                  <h2 className="text-[48px] leading-[56px] font-semibold tracking-[0.1px] text-[#3a3428]">Routines</h2>
                  <p className="mt-[7px] text-[28px] leading-10 tracking-[-0.05px] text-[#6b6352]">
                    Watch and control scheduled skill runs
                  </p>
                </div>
                <div className="mt-2.5 flex items-center gap-4 text-[28px] font-medium text-[#3a3428]">
                  <button className="flex h-[78px] w-[222px] items-center rounded-xl border-2 border-[#eae2cd] pl-8">
                    <Icon name="refresh" className="mr-4 h-8 w-8" />
                    Refresh
                  </button>
                  <button className="flex h-[78px] w-[272px] items-center rounded-xl border-2 border-[#eae2cd] pl-8">
                    <Icon name="pack" className="mr-4 h-8 w-8" />
                    Install pack
                  </button>
                  <button className="flex h-[74px] w-[276px] items-center rounded-xl bg-[#6fa8ca] pl-8 text-white">
                    <Icon name="plus" className="mr-4 h-8 w-8" />
                    New routine
                  </button>
                </div>
              </div>

              <div className="mt-[34px] flex">
                <StatCard label="Routines" value="2" icon="robotOutline" accent />
                <StatCard label="Runs today" value="0" icon="chart" className="ml-6" />
                <StatCard label="Active" value="0" icon="playOutline" className="ml-4" />
                <StatCard label="Failures today" value="0" icon="alert" className="ml-6" />
              </div>

              <div className="mt-8 flex gap-6">
                <RoutineList />
                <RoutineDetail />
              </div>
            </div>
          </main>
        </div>
        <StatusBar />
      </div>
    </div>
  );
};

export default App;
